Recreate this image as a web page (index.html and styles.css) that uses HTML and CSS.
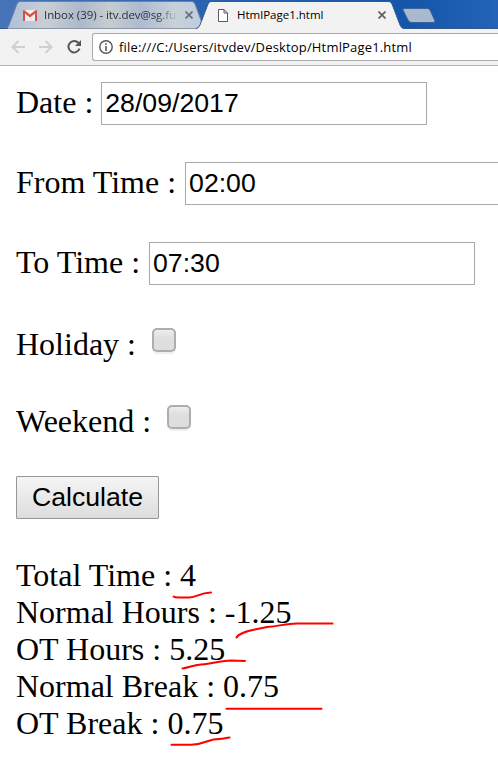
FILE: index.html
```html
<!DOCTYPE html>
<html lang="en">
<head>
<meta charset="utf-8">
<title>HtmlPage1.html</title>
<link rel="stylesheet" href="styles.css">
</head>
<body>
<header class="browser">
  <div class="tabstrip">
    <svg class="tab-shapes" width="498" height="29" viewBox="0 0 498 29" aria-hidden="true">
      <defs>
        <linearGradient id="sky" x1="0" x2="1"><stop offset="0" stop-color="#4674b7"/><stop offset=".4" stop-color="#2b63b0"/><stop offset=".82" stop-color="#1456a9"/><stop offset="1" stop-color="#2463b7"/></linearGradient>
        <linearGradient id="glass" x1="0" x2="1"><stop offset="0" stop-color="#aebfd9"/><stop offset=".2" stop-color="#c8cfd4"/><stop offset=".38" stop-color="#adb9ca"/><stop offset=".52" stop-color="#c6cdcf"/><stop offset=".68" stop-color="#adbbd0"/><stop offset=".85" stop-color="#c8d1d8"/><stop offset="1" stop-color="#bdcce0"/></linearGradient>
      </defs>
      <path fill="url(#sky)" d="M0 0H498V29H0z"/>
      <path d="M6 28.5C8 28 8 27 9 25L17 4Q18 1.500 20 1.500H192Q194 1.500 195 4L204 28.500z" fill="url(#glass)" stroke="#6d83a3"/>
      <path d="M0 28.500H498" stroke="#36598c"/>
      <path d="M8 28.500H198" stroke="#8d98a8"/>
      <path d="M196 29Q199 28 200 25L208 4Q209 1.500 211 1.500H389Q391 1.500 392 4L400 25Q401 28 404 29z" fill="#f2f2f2"/>
      <path d="M196 28.500Q199 28 200 25L208 4Q209 1.500 211 1.500H389Q391 1.500 392 4L400 25Q401 28 404 28.500" fill="none" stroke="#315b91"/>
      <path d="M404 8.500H427Q429 8.500 430 10L435 21Q435 22.500 433 22.500H412Q409 22.500 408 20L403 10Q402.500 8.500 404 8.500z" fill="#a8b9d0" stroke="#3d6499"/>
    </svg>
    <div class="tab tab-mail">
      <svg width="14" height="11" viewBox="0 0 14 11"><path fill="#eee" d="M1 0H13V11H1z"/><path fill="#d6504b" d="M0 1Q0 0 1.200 0L7 4.600 12.800 0Q14 0 14 1V11H12V3.600L7 7.400 2 3.600V11H0z"/></svg>
      <span class="tab-title">Inbox (39) - itv.dev@sg.fu</span>
      <svg class="close" width="8" height="8" viewBox="0 0 8 8"><path d="M.5.500l7 7m0-7l-7 7" stroke="#65707b" stroke-width="1.700"/></svg>
    </div>
    <div class="tab tab-page">
      <svg width="10" height="13" viewBox="0 0 10 13"><path d="M.5.500H6L9.500 4V12.500H.5zM6 .500V4H9.500" fill="#fff" stroke="#5a5a5a"/></svg>
      <span class="tab-title">HtmlPage1.html</span>
      <svg class="close" width="8" height="8" viewBox="0 0 8 8"><path d="M.5.500l7 7m0-7l-7 7" stroke="#606060" stroke-width="1.700"/></svg>
    </div>
  </div>
  <div class="toolbar">
    <svg class="nav" width="14" height="14" viewBox="0 0 14 14"><path d="M14 7H1.500M7.500 1L1.500 7l6 6" fill="none" stroke="#cfcfcf" stroke-width="2"/></svg>
    <svg class="nav" width="14" height="14" viewBox="0 0 14 14"><path d="M0 7H12.500M6.500 1l6 6-6 6" fill="none" stroke="#cfcfcf" stroke-width="2"/></svg>
    <svg class="nav" width="14" height="14" viewBox="0 0 14 14"><path d="M11.500 3A5.700 5.700 0 1 0 12.500 8.700" fill="none" stroke="#555" stroke-width="2"/><path d="M14 0V6H8z" fill="#555"/></svg>
    <div class="address">
      <svg width="14" height="14" viewBox="0 0 14 14"><circle cx="7" cy="7" r="6.200" fill="none" stroke="#555" stroke-width="1.400"/><path d="M7 3.200V4.800M7 6V11" stroke="#555" stroke-width="1.600"/></svg>
      <span class="url">file:///C:/Users/itvdev/Desktop/HtmlPage1.html</span>
    </div>
  </div>
</header>
<main class="page">
  <label class="field"><span class="label">Date :</span><input class="text-input" type="text" value="28/09/2017"></label>
  <label class="field"><span class="label">From Time :</span><input class="text-input" type="text" value="02:00"></label>
  <label class="field"><span class="label">To Time :</span><input class="text-input" type="text" value="07:30"></label>
  <label class="option"><span class="option-label">Holiday :</span><input class="check" type="checkbox"></label>
  <label class="option"><span class="option-label">Weekend :</span><input class="check" type="checkbox"></label>
  <button class="calculate" type="button">Calculate</button>
  <section class="results">
    <div>Total Time : 4</div>
    <div>Normal Hours : -1.25</div>
    <div>OT Hours : 5.25</div>
    <div>Normal Break : 0.75</div>
    <div>OT Break : 0.75</div>
    <svg class="marks" width="482" height="200" viewBox="16 557 482 200" aria-hidden="true">
      <path d="M173.500 596.500Q175 597.500 178 597.500H189C198 597.500 198 593 211 592.500"/>
      <path d="M236.500 637.500C240 631 258 629 267 627C280 626 286 623.500 297 623.500H332.500"/>
      <path d="M182.500 668.500C188 668 193 665 201 664.500C213 664 221 660.500 231 660.500L245 661"/>
      <path d="M226.500 708.800H321.500"/>
      <path d="M171.500 744.700H191C206 744.700 206 738.500 222 738.700L229.500 737.500"/>
    </svg>
  </section>
</main>
</body>
</html>
```
FILE: styles.css
```css
* { box-sizing: border-box; }
body {
  margin: 0;
  width: 498px;
  height: 770px;
  overflow: hidden;
  background: #fff;
  color: #000;
  font-family: "Liberation Serif", serif;
}
.browser { height: 66px; font-family: "Open Sans", "Noto Sans", sans-serif; }
.tabstrip { position: relative; display: flex; height: 29px; }
.tab-shapes { position: absolute; inset: 0; z-index: -1; }
.tab { display: flex; align-items: center; height: 29px; padding-top: 1px; }
.tab-title { white-space: nowrap; overflow: hidden; font-size: 11.5px; line-height: 16px; letter-spacing: -0.07px; }
.tab-mail { width: 204px; padding-left: 23px; color: #28313c; }
.tab-mail .tab-title {
  width: 134px;
  margin-left: 7px;
  -webkit-mask-image: linear-gradient(90deg, #000 112px, transparent 134px);
  mask-image: linear-gradient(90deg, #000 112px, transparent 134px);
}
.tab-mail .close { margin-left: 7px; }
.tab-page { width: 200px; padding-left: 14px; }
.tab-page .tab-title { width: 134px; margin-left: 9px; letter-spacing: 0; }
.tab-page .close { margin-left: 7px; }
.toolbar {
  display: flex;
  align-items: center;
  gap: 14px;
  height: 37px;
  padding: 0 0 1px 11px;
  background: #f2f2f2;
  border-bottom: 1px solid #b5b5b5;
}
.nav { flex: none; }
.address {
  display: flex;
  align-items: center;
  flex: 1;
  height: 28px;
  margin-left: -3px;
  padding-left: 6px;
  border: 1px solid #aaa;
  border-right: 0;
  border-radius: 3px 0 0 3px;
  background: #fff;
}
.url { margin-left: 6px; font-size: 13px; line-height: 20px; letter-spacing: 0.17px; white-space: nowrap; }
.page { display: flex; flex-direction: column; align-items: flex-start; padding: 16px 0 0 16px; font-size: 32px; line-height: 37px; }
.field { display: flex; align-items: flex-start; gap: 8px; height: 43px; margin-bottom: 37px; white-space: nowrap; }
.field + .field { gap: 9px; }
.label { padding-top: 2px; }
.text-input {
  flex: none;
  width: 326px;
  height: 43px;
  margin: 0;
  padding: 1px 3px 2px;
  border: 1px solid #a9a9a9;
  border-radius: 0;
  color: #000;
  background: #fff;
  font: 26.667px "Liberation Sans", sans-serif;
}
.option { display: flex; align-items: flex-start; gap: 16px; height: 37px; margin-bottom: 40px; }
.option-label { padding-top: 4px; }
.check {
  appearance: none;
  width: 24px;
  height: 24px;
  margin: 6px 0 0;
  border: 2px solid #adadad;
  border-radius: 5px;
  background: linear-gradient(#eee, #dedede 40%, #dedede);
  box-shadow: 0 2px 1px #eee;
}
.calculate {
  width: 143px;
  height: 43px;
  padding: 0;
  border: 1px solid #979797;
  border-radius: 1px;
  color: #000;
  background: linear-gradient(#f5f5f5, #ddd);
  font: 26.667px "Liberation Sans", sans-serif;
}
.results { position: relative; margin-top: 38px; white-space: nowrap; }
.marks { position: absolute; left: 0; top: 0; fill: none; stroke: #f00; stroke-width: 2; stroke-linecap: round; }
```
